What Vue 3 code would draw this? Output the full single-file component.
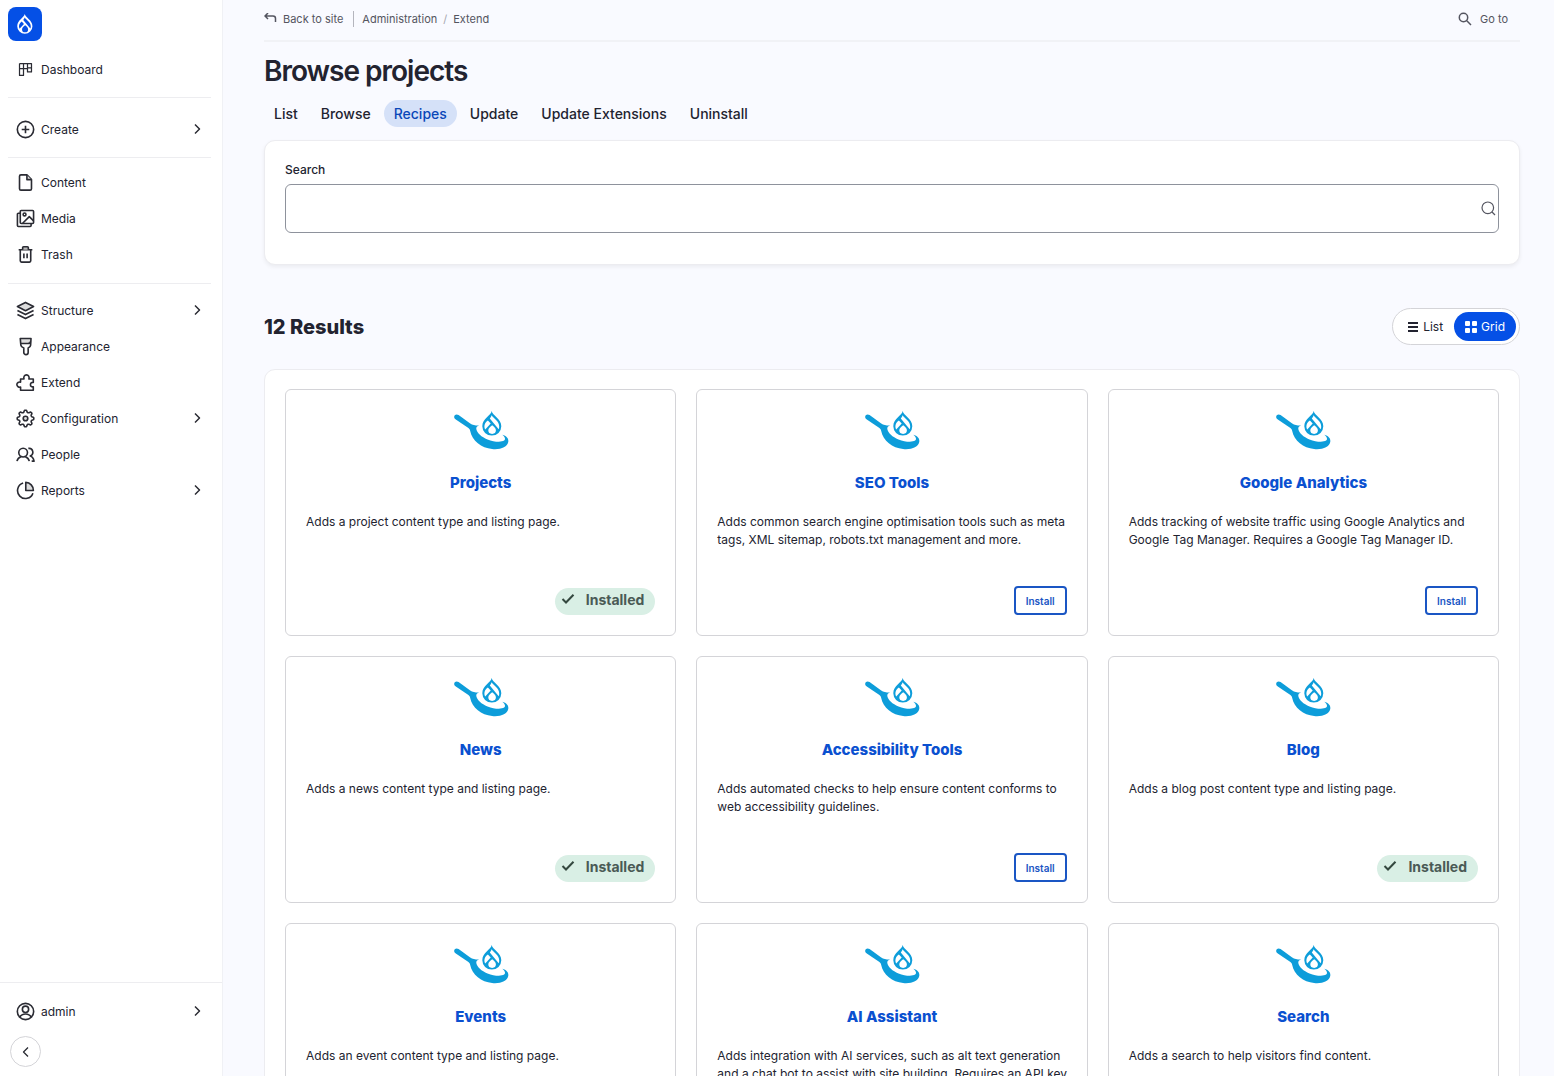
<script setup>
// Outline of the settings wheel: eight rounded teeth around the centre
const gearPath = (() => {
  const points = []
  for (let i = 0; i < 96; i++) {
    const angle = (i / 96) * Math.PI * 2
    const wave = Math.tanh(1.8 * Math.cos(8 * angle))
    const radius = 7.7 + 1.1 * wave
    points.push(`${(10 + radius * Math.sin(angle)).toFixed(2)} ${(10 - radius * Math.cos(angle)).toFixed(2)}`)
  }
  return 'M' + points.join('L') + 'z'
})()

const menu = [
  [{ label: 'Dashboard', icon: 'dashboard' }],
  [{ label: 'Create', icon: 'create', sub: true }],
  [
    { label: 'Content', icon: 'content' },
    { label: 'Media', icon: 'media' },
    { label: 'Trash', icon: 'trash' },
  ],
  [
    { label: 'Structure', icon: 'structure', sub: true },
    { label: 'Appearance', icon: 'appearance' },
    { label: 'Extend', icon: 'extend' },
    { label: 'Configuration', icon: 'configuration', sub: true },
    { label: 'People', icon: 'people' },
    { label: 'Reports', icon: 'reports', sub: true },
  ],
]

const icons = {
  dashboard:
    '<path d="M3.700 3.700h12.600v8.800h-4.200V3.700M3.700 3.700v12.600h4.200V3.700M3.700 9h8.400M12.100 8.400h4.200" stroke-width="1.300"/>',
  create: '<circle cx="10" cy="10" r="8.600"/><path d="M10 6v8M6 10h8"/>',
  content:
    '<path d="M11.500 2H5.200A1.500 1.500 0 0 0 3.700 3.500v13A1.500 1.500 0 0 0 5.200 18h9.600a1.500 1.500 0 0 0 1.500-1.500V7z"/><path d="M11.500 2v5h4.800" fill="#ddd"/>',
  media:
    '<rect x="4.500" y="1.600" width="14" height="13.600" rx="1"/><path d="M4.500 4.500h-2a1 1 0 0 0-1 1v11.900a1 1 0 0 0 1 1h12.400a1 1 0 0 0 1-1v-2M7 15l7-7 4.500 4.500"/><circle cx="9" cy="5.700" r="1.500"/>',
  trash:
    '<path d="M2.800 5h14.400M4.500 5v11.700a1.300 1.300 0 0 0 1.300 1.300h8.400a1.300 1.300 0 0 0 1.300-1.300V5M8.300 9v5M11.700 9v5"/><path d="M7 5V2.800a1 1 0 0 1 1-1h4a1 1 0 0 1 1 1V5" fill="#bbb"/>',
  structure:
    '<path d="M10 1.500l8.500 4.300L10 10.200 1.500 5.800z" fill="#ddd"/><path d="M1.500 10l8.500 4.300 8.500-4.300M1.500 14.200l8.500 4.300 8.500-4.300"/>',
  appearance:
    '<path d="M4 1.500h12v5H4z" fill="#ddd" stroke="none"/><path d="M4.500 1.600h11.300L15.400 8.500c-.2 2-1.400 2.500-2.600 3v4.700a2.300 2.300 0 0 1-4.600 0v-4.700c-2-.6-2.900-1.500-3.100-3zM5 6.800h7.500c2 0 2.800-.8 3-2.500"/>',
  extend:
    '<path d="M4.800 18.200v-3.400c-1.800.5-3.900-.6-3.900-2.600s2.100-3.100 3.900-2.600V6.300h3.600C7.700 4 8.900 2 11 2s3.300 2 2.600 4.300h4.600v3.600c-1.900-.3-3 .8-3 2.400s1.100 2.600 3 2.300v3.600z"/>',
  configuration: `<path d="${gearPath}"/><circle cx="10" cy="10" r="2.400" fill="#ddd"/>`,
  people:
    '<circle cx="7.500" cy="8" r="4.600"/><path d="M1 17c.6-2.400 2-4 4.200-4.700M14 17c-.6-2.400-2-4-4.200-4.700M13 3.600c5.200-.8 6.400 6.300 2 8 2 .6 3.400 2.400 4 5.400h-2.500"/>',
  reports:
    '<path d="M7.500 2.200a8.300 8.300 0 1 0 10.300 10.600"/><path d="M10.300 1.500a8.300 8.300 0 0 1 8 8.500h-8z" fill="#ddd"/>',
}

// The droplet mark, shared by the logo and the recipe illustration
const drop =
  'M38.700 0C38 4.500 29.300 7.600 29.300 15.300a9.500 9.300 0 0 0 19 0C48.300 7.600 39.400 4.500 38.700 0z' +
  'M38.700 4.300C40.300 7.500 46.200 9.800 46.200 15.500q0 1.500-.5 2.700L36.800 7.600Q38 6 38.700 4.300z' +
  'M34.900 9.500L37.700 12.400 32.200 18.500C30.500 15 31.800 11.600 34.900 9.500z' +
  'M39.200 14.200C40.800 15.600 42.900 17 42.900 19.300a3.700 3.500 0 0 1-7.600 0C35.300 17 37.600 15.600 39.200 14.200z'

const tabs = ['List', 'Browse', 'Recipes', 'Update', 'Update Extensions', 'Uninstall']

const recipes = [
  { name: 'Projects', text: 'Adds a project content type and listing page.', installed: true },
  { name: 'SEO Tools', text: 'Adds common search engine optimisation tools such as meta tags, XML sitemap, robots.txt management and more.' },
  { name: 'Google Analytics', text: 'Adds tracking of website traffic using Google Analytics and Google Tag Manager. Requires a Google Tag Manager ID.' },
  { name: 'News', text: 'Adds a news content type and listing page.', installed: true },
  { name: 'Accessibility Tools', text: 'Adds automated checks to help ensure content conforms to web accessibility guidelines.' },
  { name: 'Blog', text: 'Adds a blog post content type and listing page.', installed: true },
  { name: 'Events', text: 'Adds an event content type and listing page.', installed: true },
  { name: 'AI Assistant', text: 'Adds integration with AI services, such as alt text generation and a chat bot to assist with site building. Requires an API key' },
  { name: 'Search', text: 'Adds a search to help visitors find content.', installed: true },
]
</script>

<template>
  <div class="page">
    <aside class="sidebar">
      <a href="#" class="logo" aria-label="Home">
        <svg width="16" height="20" viewBox="29 0 20 25"><path :d="drop" fill="#fff" fill-rule="evenodd" /></svg>
      </a>
      <nav aria-label="Administration">
        <ul v-for="(group, i) in menu" :key="i" class="group" :class="'group-' + i">
          <li v-for="item in group" :key="item.label">
            <a href="#" class="item">
              <svg class="icon" viewBox="0 0 20 20" v-html="icons[item.icon]"></svg>
              <span>{{ item.label }}</span>
              <svg v-if="item.sub" class="chevron" viewBox="0 0 8 12"><path d="M2 1.500L6.500 6 2 10.500" /></svg>
            </a>
          </li>
        </ul>
      </nav>
      <div class="foot">
        <a href="#" class="item">
          <svg class="icon" viewBox="0 0 20 20">
            <circle cx="10" cy="10" r="8.600" /><circle cx="10" cy="7.700" r="3.300" />
            <path d="M4 16c1.300-2.500 3.300-3.400 6-3.400s4.700.9 6 3.400" />
          </svg>
          <span>admin</span>
          <svg class="chevron" viewBox="0 0 8 12"><path d="M2 1.500L6.500 6 2 10.500" /></svg>
        </a>
        <button class="collapse" aria-label="Collapse sidebar">
          <svg class="chevron" viewBox="0 0 8 12"><path d="M6 1.500L1.500 6 6 10.500" /></svg>
        </button>
      </div>
    </aside>

    <main class="main">
      <header class="topbar">
        <a href="#" class="back">
          <svg width="13" height="12" viewBox="0 0 13 12"><path d="M4 0L1 3l3 3M1.300 3H9a2.500 2.500 0 0 1 2.500 2.500V9" /></svg>
          Back to site
        </a>
        <nav class="crumbs" aria-label="Breadcrumb">
          <a href="#">Administration</a><span class="slash">/</span><a href="#">Extend</a>
        </nav>
        <button class="goto">
          <svg width="14" height="14" viewBox="0 0 14 14"><circle cx="5.500" cy="5.500" r="4.200" /><path d="M8.800 8.800L13 13" /></svg>
          Go to
        </button>
      </header>

      <h1>Browse projects</h1>

      <nav class="tabs" aria-label="Tabs">
        <a v-for="tab in tabs" :key="tab" href="#" :class="{ active: tab === 'Recipes' }">{{ tab }}</a>
      </nav>

      <form class="panel search" @submit.prevent>
        <label for="search">Search</label>
        <div class="field">
          <input id="search" type="text" />
          <svg width="15" height="15" viewBox="0 0 15 15"><circle cx="6.800" cy="6.800" r="5.800" /><path d="M11 11l3 3" /></svg>
        </div>
      </form>

      <div class="results">
        <h2>12 Results</h2>
        <div class="toggle">
          <button>
            <svg width="12" height="12" viewBox="0 0 12 12"><path d="M1 2h10M1 6h10M1 10h10" stroke="currentColor" stroke-width="2" /></svg>
            List
          </button>
          <button class="on">
            <svg width="12" height="12" viewBox="0 0 12 12" fill="currentColor"><rect width="5" height="5" rx="1" /><rect x="7" width="5" height="5" rx="1" /><rect y="7" width="5" height="5" rx="1" /><rect x="7" y="7" width="5" height="5" rx="1" /></svg>
            Grid
          </button>
        </div>
      </div>

      <section class="panel cards">
        <article v-for="r in recipes" :key="r.name" class="card">
          <svg class="pan" width="56" height="40" viewBox="0 0 56 40" fill="#0d9dda">
            <path d="M1.200 5.600C1.500 3.600 3.500 2.800 5.600 4L17.200 12.400c2.300 1.600 5.300 2.200 9 2.100-2 .5-3.200 1.600-2.900 3.400.8 4 5.200 8 11.200 10.500 6.300 2.500 13.700 3 16.600 1.200 2-1.400.6-3.800-1.800-5.800 4 1.100 6.600 3.600 6 7-1 5.400-8 8.200-16.200 7.300C28.500 36.800 19 30 17.200 20c-.3-1.600-1-2.500-2.500-3.400L2.800 8.600C1.600 7.800 1 6.800 1.200 5.600z" />
            <path :d="drop" fill-rule="evenodd" />
          </svg>
          <h3><a href="#">{{ r.name }}</a></h3>
          <p>{{ r.text }}</p>
          <div class="action">
            <span v-if="r.installed" class="installed">
              <svg width="14" height="12" viewBox="0 0 14 12"><path d="M1.500 6l3.500 3.500L12.500 1.700" /></svg>
              Installed
            </span>
            <button v-else class="install">Install</button>
          </div>
        </article>
      </section>
    </main>
  </div>
</template>

<style>
body {
  background: #f9faff;
}
</style>

<style scoped>
* {
  box-sizing: border-box;
}
.page {
  display: flex;
  height: 100vh;
  overflow: hidden;
  font-family: Inter, sans-serif;
  font-size: 12px;
  color: #222330;
  background: #f9faff;
}
a {
  color: inherit;
  text-decoration: none;
}
button {
  font-family: inherit;
  color: inherit;
  margin: 0;
  cursor: pointer;
}
svg {
  flex: none;
}
.sidebar {
  flex: none;
  display: flex;
  flex-direction: column;
  width: 223px;
  background: #fff;
  border-right: 1px solid #f0f1f5;
}
.logo {
  display: flex;
  align-items: center;
  justify-content: center;
  width: 34px;
  height: 34px;
  margin: 7px 0 0 8px;
  border-radius: 8px;
  background: #0550e6;
}
.group {
  list-style: none;
  margin: 0 11px 0 8px;
  padding: 6px 0 11px;
}
.group + .group {
  border-top: 1px solid #ededf0;
}
.group-0 {
  padding: 10px 0;
}
.group-1 {
  padding: 13px 0 10px;
}
.group-3 {
  padding-top: 8px;
}
.item {
  display: flex;
  align-items: center;
  gap: 6px;
  height: 36px;
  padding: 0 10px 0 8px;
}
.icon {
  width: 19px;
  height: 19px;
}
.icon,
.chevron {
  fill: none;
  stroke: #2a2b33;
  stroke-width: 1.7px;
  stroke-linejoin: round;
}
.chevron {
  width: 8px;
  height: 12px;
  margin-left: auto;
  stroke-width: 1.5px;
}
.foot {
  margin-top: auto;
  padding: 10px 11px 9px 8px;
  border-top: 1px solid #ededf0;
}
.collapse {
  display: flex;
  align-items: center;
  justify-content: center;
  width: 31px;
  height: 31px;
  margin: 7px 0 0 2px;
  padding: 0;
  border: 1px solid #d4d4d8;
  border-radius: 50%;
  background: #fff;
}
.collapse .chevron {
  margin: 0;
  stroke-width: 1.3px;
}
.main {
  flex: 1;
  min-width: 0;
  padding: 0 34px 0 41px;
  overflow-y: auto;
  scrollbar-width: none;
}
.topbar {
  display: flex;
  align-items: center;
  height: 42px;
  padding: 0 12px 3px 0;
  border-bottom: 2px solid #f1f2f6;
  font-size: 11px;
  color: #545560;
}
.topbar svg,
.field svg {
  fill: none;
  stroke: #545560;
  stroke-width: 1.5px;
}
.back,
.goto {
  display: flex;
  align-items: center;
  gap: 6px;
}
.crumbs {
  margin-left: 10px;
  padding: 1px 0 1px 8px;
  border-left: 1px solid #b4b5bd;
}
.slash {
  margin: 0 6px;
  color: #a5a6ae;
}
.goto {
  gap: 8px;
  margin-left: auto;
  padding: 0;
  border: 0;
  background: none;
  font-size: 11px;
}
h1 {
  margin: 10px 0 0;
  font-size: 28px;
  line-height: 38px;
  font-weight: 600;
  letter-spacing: -1px;
}
.tabs {
  display: flex;
  gap: 3px;
  margin-top: 10px;
  font-size: 14px;
  line-height: 27px;
  font-weight: 500;
}
.tabs a {
  padding: 0 10px;
  border-radius: 14px;
}
.tabs .active {
  color: #0a47b8;
  background: #d5e1f8;
}
.panel {
  background: #fff;
  border: 1px solid #ececf0;
  border-radius: 11px;
}
.search {
  height: 125px;
  margin-top: 13px;
  padding: 20px;
  box-shadow: 0 2px 4px #0000000f;
}
.search label {
  display: block;
  line-height: 18px;
  font-size: 12px;
  font-weight: 500;
}
.field {
  position: relative;
  margin-top: 5px;
}
.field input {
  display: block;
  width: 100%;
  height: 49px;
  padding: 0 28px 0 12px;
  border: 1px solid #8e929c;
  border-radius: 6px;
  background: #fff;
  font-family: inherit;
  font-size: 14px;
}
.field svg {
  position: absolute;
  top: 17px;
  right: 3px;
  stroke-width: 1.2px;
}
.results {
  display: flex;
  align-items: center;
  justify-content: space-between;
  margin-top: 43px;
}
h2 {
  margin: 0;
  font-size: 20px;
  font-weight: 800;
}
.toggle {
  display: flex;
  padding: 3px;
  border: 1px solid #d4d4d8;
  border-radius: 19px;
  background: #fff;
}
.toggle button {
  display: flex;
  align-items: center;
  gap: 4px;
  height: 29px;
  padding: 0 11px;
  border: 0;
  border-radius: 15px;
  background: none;
  font-size: 12px;
}
.toggle .on {
  color: #fff;
  background: #0550e6;
}
.cards {
  display: grid;
  grid-template-columns: repeat(3, minmax(0, 1fr));
  gap: 20px;
  margin-top: 24px;
  padding: 19px 20px;
}
.card {
  display: flex;
  flex-direction: column;
  height: 247px;
  padding: 21px 20px 20px;
  border: 1px solid #d4d4d8;
  border-radius: 6px;
}
.pan {
  align-self: center;
}
h3 {
  margin: 20px 0 0;
  font-size: 15px;
  line-height: 24px;
  font-weight: 800;
  text-align: center;
  color: #0a50d0;
}
p {
  margin: 18px -4px 0 0;
  font-size: 12px;
  line-height: 18px;
}
.action {
  display: flex;
  justify-content: flex-end;
  margin-top: auto;
}
.installed {
  display: flex;
  align-items: center;
  gap: 11px;
  height: 27px;
  padding: 0 11px 5px 6px;
  border-radius: 14px;
  background: #d9efe5;
  color: #4a5a55;
  font-size: 14px;
  font-weight: 700;
}
.installed svg {
  fill: none;
  stroke: #34483f;
  stroke-width: 2px;
}
.install {
  height: 29px;
  padding: 0 10px;
  border: 2px solid #1a56c4;
  border-radius: 4px;
  background: #fff;
  color: #1a56c4;
  font-size: 10px;
  font-weight: 600;
}
</style>
